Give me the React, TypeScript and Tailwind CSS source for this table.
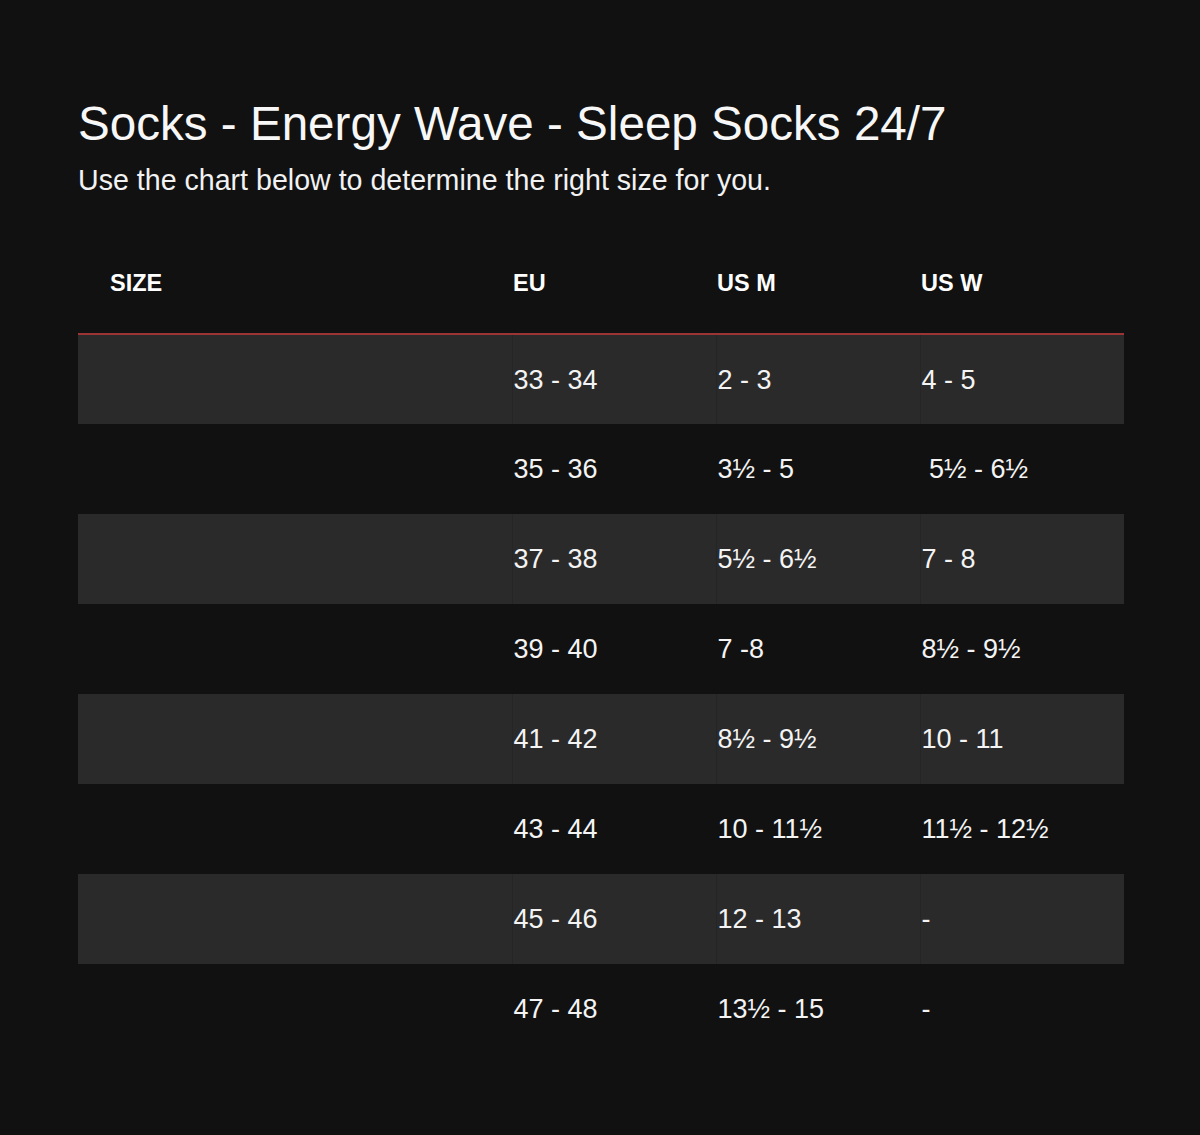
import React from "react";

const rows = [
  ["", "33 - 34", "2 - 3", "4 - 5"],
  ["", "35 - 36", "3½ - 5", "\u00a05½ - 6½"],
  ["", "37 - 38", "5½ - 6½", "7 - 8"],
  ["", "39 - 40", "7 -8", "8½ - 9½"],
  ["", "41 - 42", "8½ - 9½", "10 - 11"],
  ["", "43 - 44", "10 - 11½", "11½ - 12½"],
  ["", "45 - 46", "12 - 13", "-"],
  ["", "47 - 48", "13½ - 15", "-"],
];

export default function App() {
  return (
    <div
      className="min-h-[1135px] w-full bg-[#111111] text-white px-[78px] pt-[94px]"
      style={{ fontFamily: '"Liberation Sans", Arial, sans-serif' }}
    >
      <h1 className="text-[47.6px] leading-[60px] font-normal text-[#f7f7f7]">
        Socks - Energy Wave - Sleep Socks 24/7
      </h1>
      <p className="text-[28.6px] leading-[34px] mt-[9px] text-[#f2f2f2]">
        Use the chart below to determine the right size for you.
      </p>

      <table className="mt-[38px] w-[1046px] border-collapse table-fixed">
        <colgroup>
          <col className="w-[434px]" />
          <col className="w-[204px]" />
          <col className="w-[204px]" />
          <col className="w-[204px]" />
        </colgroup>
        <thead>
          <tr className="h-[99px] border-b-2 border-[#9b3434]">
            <th className="text-left pl-[32px] text-[23.5px] font-bold">SIZE</th>
            <th className="text-left pl-[1px] text-[23.5px] font-bold">EU</th>
            <th className="text-left pl-[1px] text-[23.5px] font-bold">US M</th>
            <th className="text-left pl-[1px] text-[23.5px] font-bold">US W</th>
          </tr>
        </thead>
        <tbody>
          {rows.map((r, i) => {
            const striped = i % 2 === 0;
            return (
              <tr key={i} className={`h-[90px] ${striped ? "bg-[#2a2a2a]" : "bg-[#111111]"}`}>
                {r.map((c, j) => (
                  <td
                    key={j}
                    className={`text-left text-[27px] text-[#f4f4f4] align-middle pt-[1px] ${
                      j > 0
                        ? `pl-[1px] border-l ${striped ? "border-[#252525]" : "border-[#111111]"}`
                        : "pl-[32px]"
                    }`}
                  >
                    {c}
                  </td>
                ))}
              </tr>
            );
          })}
        </tbody>
      </table>
    </div>
  );
}
